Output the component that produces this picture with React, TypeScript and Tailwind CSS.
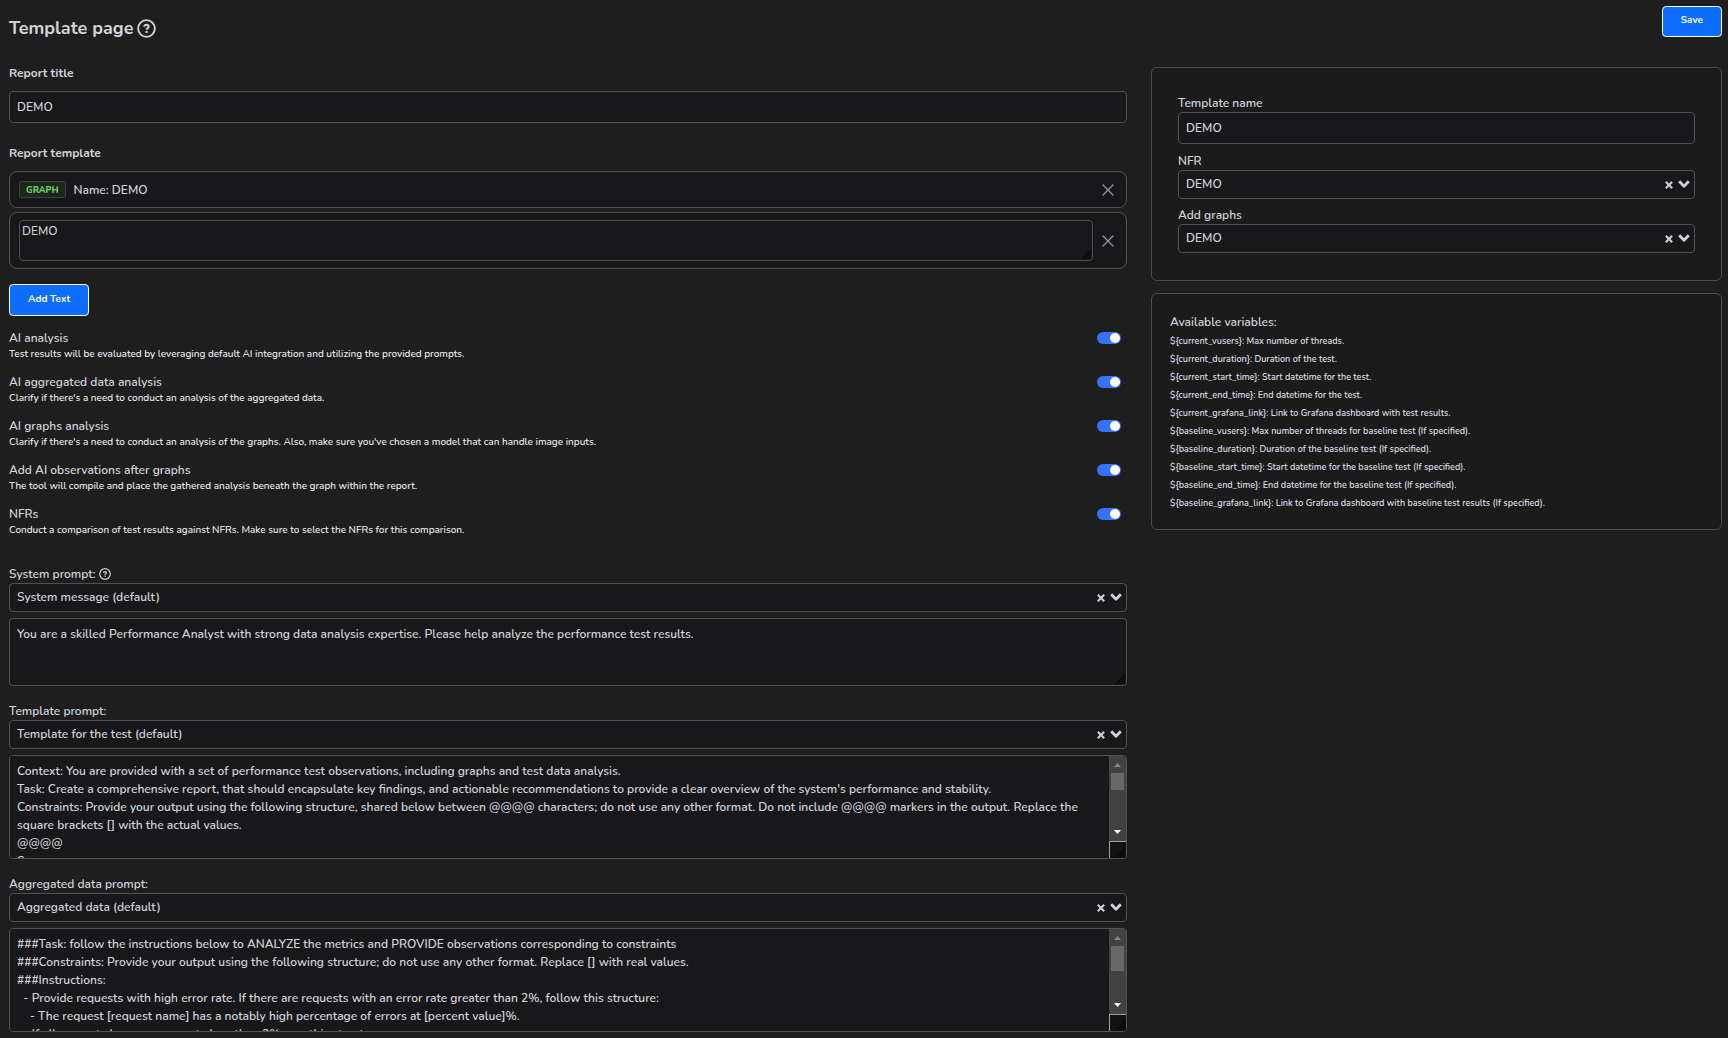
import type { ReactNode } from "react";

const TOGGLES = [
  {
    id: "ai-analysis",
    title: "AI analysis",
    text: "Test results will be evaluated by leveraging default AI integration and utilizing the provided prompts.",
  },
  {
    id: "ai-aggregated",
    title: "AI aggregated data analysis",
    text: "Clarify if there's a need to conduct an analysis of the aggregated data.",
  },
  {
    id: "ai-graphs",
    title: "AI graphs analysis",
    text: "Clarify if there's a need to conduct an analysis of the graphs. Also, make sure you've chosen a model that can handle image inputs.",
  },
  {
    id: "ai-observations",
    title: "Add AI observations after graphs",
    text: "The tool will compile and place the gathered analysis beneath the graph within the report.",
  },
  {
    id: "nfrs",
    title: "NFRs",
    text: "Conduct a comparison of test results against NFRs. Make sure to select the NFRs for this comparison.",
  },
];

const VARIABLES = [
  "${current_vusers}: Max number of threads.",
  "${current_duration}: Duration of the test.",
  "${current_start_time}: Start datetime for the test.",
  "${current_end_time}: End datetime for the test.",
  "${current_grafana_link}: Link to Grafana dashboard with test results.",
  "${baseline_vusers}: Max number of threads for baseline test (If specified).",
  "${baseline_duration}: Duration of the baseline test (If specified).",
  "${baseline_start_time}: Start datetime for the baseline test (If specified).",
  "${baseline_end_time}: End datetime for the baseline test (If specified).",
  "${baseline_grafana_link}: Link to Grafana dashboard with baseline test results (If specified).",
];

const TEMPLATE_PROMPT = `Context: You are provided with a set of performance test observations, including graphs and test data analysis.
Task: Create a comprehensive report, that should encapsulate key findings, and actionable recommendations to provide a clear overview of the system's performance and stability.
Constraints: Provide your output using the following structure, shared below between @@@@ characters; do not use any other format. Do not include @@@@ markers in the output. Replace the square brackets [] with the actual values.
@@@@
Summary:`;

const AGGREGATED_PROMPT = `###Task: follow the instructions below to ANALYZE the metrics and PROVIDE observations corresponding to constraints
###Constraints: Provide your output using the following structure; do not use any other format. Replace [] with real values.
###Instructions:
  - Provide requests with high error rate. If there are requests with an error rate greater than 2%, follow this structure:
    - The request [request name] has a notably high percentage of errors at [percent value]%.
  - If all requests have an error rate less than 2%, use this structure:`;

function HelpIcon({ className }: { className: string }) {
  return (
    <svg viewBox="0 0 20 20" fill="none" stroke="currentColor" className={className} aria-hidden="true">
      <circle cx="10" cy="10" r="8.8" strokeWidth="2" />
      <path d="M7.7 8.2c0-1.4 1-2.2 2.3-2.2s2.3.8 2.3 2c0 1.6-2.2 1.6-2.2 3.3" strokeWidth="2.2" />
      <path d="M10.1 12.6v2.1" strokeWidth="2.4" />
    </svg>
  );
}

function Grip() {
  return (
    <svg viewBox="0 0 9 9" className="size-[9px]" stroke="#050505" strokeWidth="1.2" aria-hidden="true">
      <path d="M0 9 9 0M3.5 9 9 3.5M7 9 9 7" />
    </svg>
  );
}

function RemoveButton({ label }: { label: string }) {
  return (
    <button type="button" aria-label={label} className="flex size-4 shrink-0 items-center justify-center text-[#98989c]">
      <svg viewBox="0 0 12 12" className="size-3" stroke="currentColor" strokeWidth="1.3" aria-hidden="true">
        <path d="M.5.5l11 11M11.5.5l-11 11" />
      </svg>
    </button>
  );
}

function Label({ htmlFor, children }: { htmlFor: string; children: ReactNode }) {
  return (
    <label htmlFor={htmlFor} className="flex h-[18px] items-center gap-[3px]">
      {children}
    </label>
  );
}

function SelectField({ id, value }: { id: string; value: string }) {
  return (
    <div className="relative">
      <select
        id={id}
        defaultValue={value}
        className="block h-[29px] w-full appearance-none rounded border border-[#515153] bg-[#18181a] pr-10 pb-0.5 pl-[7px]"
      >
        <option>{value}</option>
      </select>
      <button type="button" aria-label="Clear selection" className="absolute top-[11px] right-[22px]">
        <svg viewBox="0 0 8 8" className="size-2" stroke="currentColor" strokeWidth="2" aria-hidden="true">
          <path d="M.8.8l6.4 6.4M7.2.8L.8 7.2" />
        </svg>
      </button>
      <svg
        viewBox="0 0 12 8"
        className="pointer-events-none absolute top-[10px] right-[5px] h-2 w-3"
        fill="none"
        stroke="currentColor"
        strokeWidth="2.7"
        strokeLinejoin="round"
        aria-hidden="true"
      >
        <path d="M1.2 1.2L6 6.2l4.8-5" />
      </svg>
    </div>
  );
}

function ScrollRail({ thumb }: { thumb: string }) {
  return (
    <div
      aria-hidden="true"
      className="pointer-events-none absolute inset-y-px right-px flex w-[17px] flex-col overflow-hidden rounded-r-[3px]"
    >
      <div className="flex flex-1 flex-col items-center bg-[#424242]">
        <svg viewBox="0 0 7 4" className="mt-[7px] mb-1.5 h-1 w-[7px] fill-[#858585]">
          <path d="M3.5 0L7 4H0z" />
        </svg>
        <div className={thumb} />
        <svg viewBox="0 0 7 4" className="mt-auto mb-[7px] h-1 w-[7px] fill-white">
          <path d="M0 0h7L3.5 4z" />
        </svg>
      </div>
      <div className="flex h-[17px] items-end justify-end border-t border-l border-[#a0a0a0] bg-[#121212] p-px">
        <Grip />
      </div>
    </div>
  );
}

function PromptArea({ label, value, tall, thumb }: { label: string; value: string; tall: boolean; thumb?: string }) {
  return (
    <div className="relative mt-1.5">
      <textarea
        aria-label={label}
        defaultValue={value}
        className={
          tall
            ? "block h-[104px] w-full resize-none rounded border border-[#515153] bg-[#18181a] py-1.5 pr-[22px] pl-[7px] leading-[18px] [scrollbar-width:none]"
            : "block h-[68px] w-full resize-none rounded border border-[#515153] bg-[#18181a] py-1.5 pr-[22px] pl-[7px] leading-[18px] [scrollbar-width:none]"
        }
      />
      {thumb ? (
        <ScrollRail thumb={thumb} />
      ) : (
        <div className="pointer-events-none absolute right-0.5 bottom-0.5">
          <Grip />
        </div>
      )}
    </div>
  );
}

export default function App() {
  return (
    <div className="min-h-screen bg-[#1e1e1e] pr-1.5 pl-[9px] font-['Nunito','Open_Sans',sans-serif] text-xs font-semibold text-[#d2d3da]">
      <header className="flex items-start justify-between pt-1.5 pb-6">
        <h1 className="mt-[10px] flex h-6 items-center gap-1 text-lg font-bold">
          Template page
          <HelpIcon className="size-[19px]" />
        </h1>
        <button
          type="button"
          className="h-[31px] rounded border border-white bg-[#0d6efd] px-[18px] pb-0.5 text-[10px] font-bold text-white"
        >
          Save
        </button>
      </header>

      <div className="flex items-start">
        <main className="w-2/3 pr-6">
          <label htmlFor="report-title" className="block leading-[18px] font-bold">
            Report title
          </label>
          <input
            id="report-title"
            defaultValue="DEMO"
            className="mt-[9px] block h-8 w-full rounded border border-[#515153] bg-[#18181a] px-[7px]"
          />

          <h2 className="mt-[21px] leading-[18px] font-bold">Report template</h2>
          <div className="mt-[9px] flex h-[37px] items-center rounded-lg border border-[#515153] bg-[#18181a] pr-2.5 pl-[9px]">
            <span className="flex h-[17px] items-center rounded-xs border border-[#2f4a30] bg-[#1d261e] px-1.5 text-[9px] font-extrabold text-[#6ccf5f]">
              GRAPH
            </span>
            <span className="ml-2 flex-1">Name: DEMO</span>
            <RemoveButton label="Remove graph" />
          </div>
          <div className="mt-1 flex h-[57px] items-center gap-[7px] rounded-lg border border-[#515153] bg-[#18181a] pr-2.5 pl-[9px]">
            <div className="relative flex-1">
              <textarea
                aria-label="Report text"
                defaultValue="DEMO"
                className="block h-[41px] w-full resize-none rounded-sm border border-[#515153] bg-[#18181a] px-0.5 py-px leading-[18px] font-medium"
              />
              <div className="pointer-events-none absolute right-0.5 bottom-0.5">
                <Grip />
              </div>
            </div>
            <RemoveButton label="Remove text" />
          </div>
          <button
            type="button"
            className="mt-[15px] block h-8 rounded border border-white bg-[#0d6efd] px-[18px] pb-px text-[10px] font-bold text-white"
          >
            Add Text
          </button>

          <div className="mt-[13px] flex flex-col gap-3">
            {TOGGLES.map((t) => (
              <div key={t.id} className="flex items-start justify-between pr-1.5">
                <div>
                  <label htmlFor={t.id} className="block leading-[18px]">
                    {t.title}
                  </label>
                  <p className="text-[10px] leading-[14px] font-medium text-[#f0f0f4]">{t.text}</p>
                </div>
                <input
                  id={t.id}
                  type="checkbox"
                  role="switch"
                  defaultChecked
                  className="mt-[3px] flex h-3 w-6 shrink-0 appearance-none items-center rounded-full bg-[#5a5a5e] px-px before:size-2.5 before:rounded-full before:bg-white before:content-[''] checked:justify-end checked:bg-[#3871ff]"
                />
              </div>
            ))}
          </div>

          <section className="mt-7">
            <Label htmlFor="system-prompt">
              System prompt:
              <HelpIcon className="size-3" />
            </Label>
            <SelectField id="system-prompt" value="System message (default)" />
            <PromptArea
              label="System prompt text"
              tall={false}
              value="You are a skilled Performance Analyst with strong data analysis expertise. Please help analyze the performance test results."
            />
          </section>
          <section className="mt-4">
            <Label htmlFor="template-prompt">Template prompt:</Label>
            <SelectField id="template-prompt" value="Template for the test (default)" />
            <PromptArea label="Template prompt text" tall value={TEMPLATE_PROMPT} thumb="h-[17px] w-[13px] bg-[#686868]" />
          </section>
          <section className="mt-4">
            <Label htmlFor="aggregated-prompt">Aggregated data prompt:</Label>
            <SelectField id="aggregated-prompt" value="Aggregated data (default)" />
            <PromptArea label="Aggregated data prompt text" tall value={AGGREGATED_PROMPT} thumb="h-[25px] w-[13px] bg-[#686868]" />
          </section>
        </main>

        <aside className="mt-[3px] flex w-1/3 flex-col gap-3">
          <section className="rounded-md border border-[#4c4c4e] bg-[#1b1b1b] px-[26px] pt-[26px] pb-[27px]">
            <Label htmlFor="template-name">Template name</Label>
            <input
              id="template-name"
              defaultValue="DEMO"
              className="mb-2 block h-8 w-full rounded border border-[#515153] bg-[#18181a] px-[7px]"
            />
            <Label htmlFor="nfr">NFR</Label>
            <SelectField id="nfr" value="DEMO" />
            <div className="mt-[7px]">
              <Label htmlFor="add-graphs">Add graphs</Label>
              <SelectField id="add-graphs" value="DEMO" />
            </div>
          </section>
          <section className="rounded-md border border-[#4c4c4e] bg-[#1b1b1b] px-[18px] pt-[18px] pb-[17px]">
            <h2 className="leading-5">Available variables:</h2>
            <ul className="text-[9px] leading-[18px] text-[#dcdce2]">
              {VARIABLES.map((v) => (
                <li key={v}>{v}</li>
              ))}
            </ul>
          </section>
        </aside>
      </div>
    </div>
  );
}
